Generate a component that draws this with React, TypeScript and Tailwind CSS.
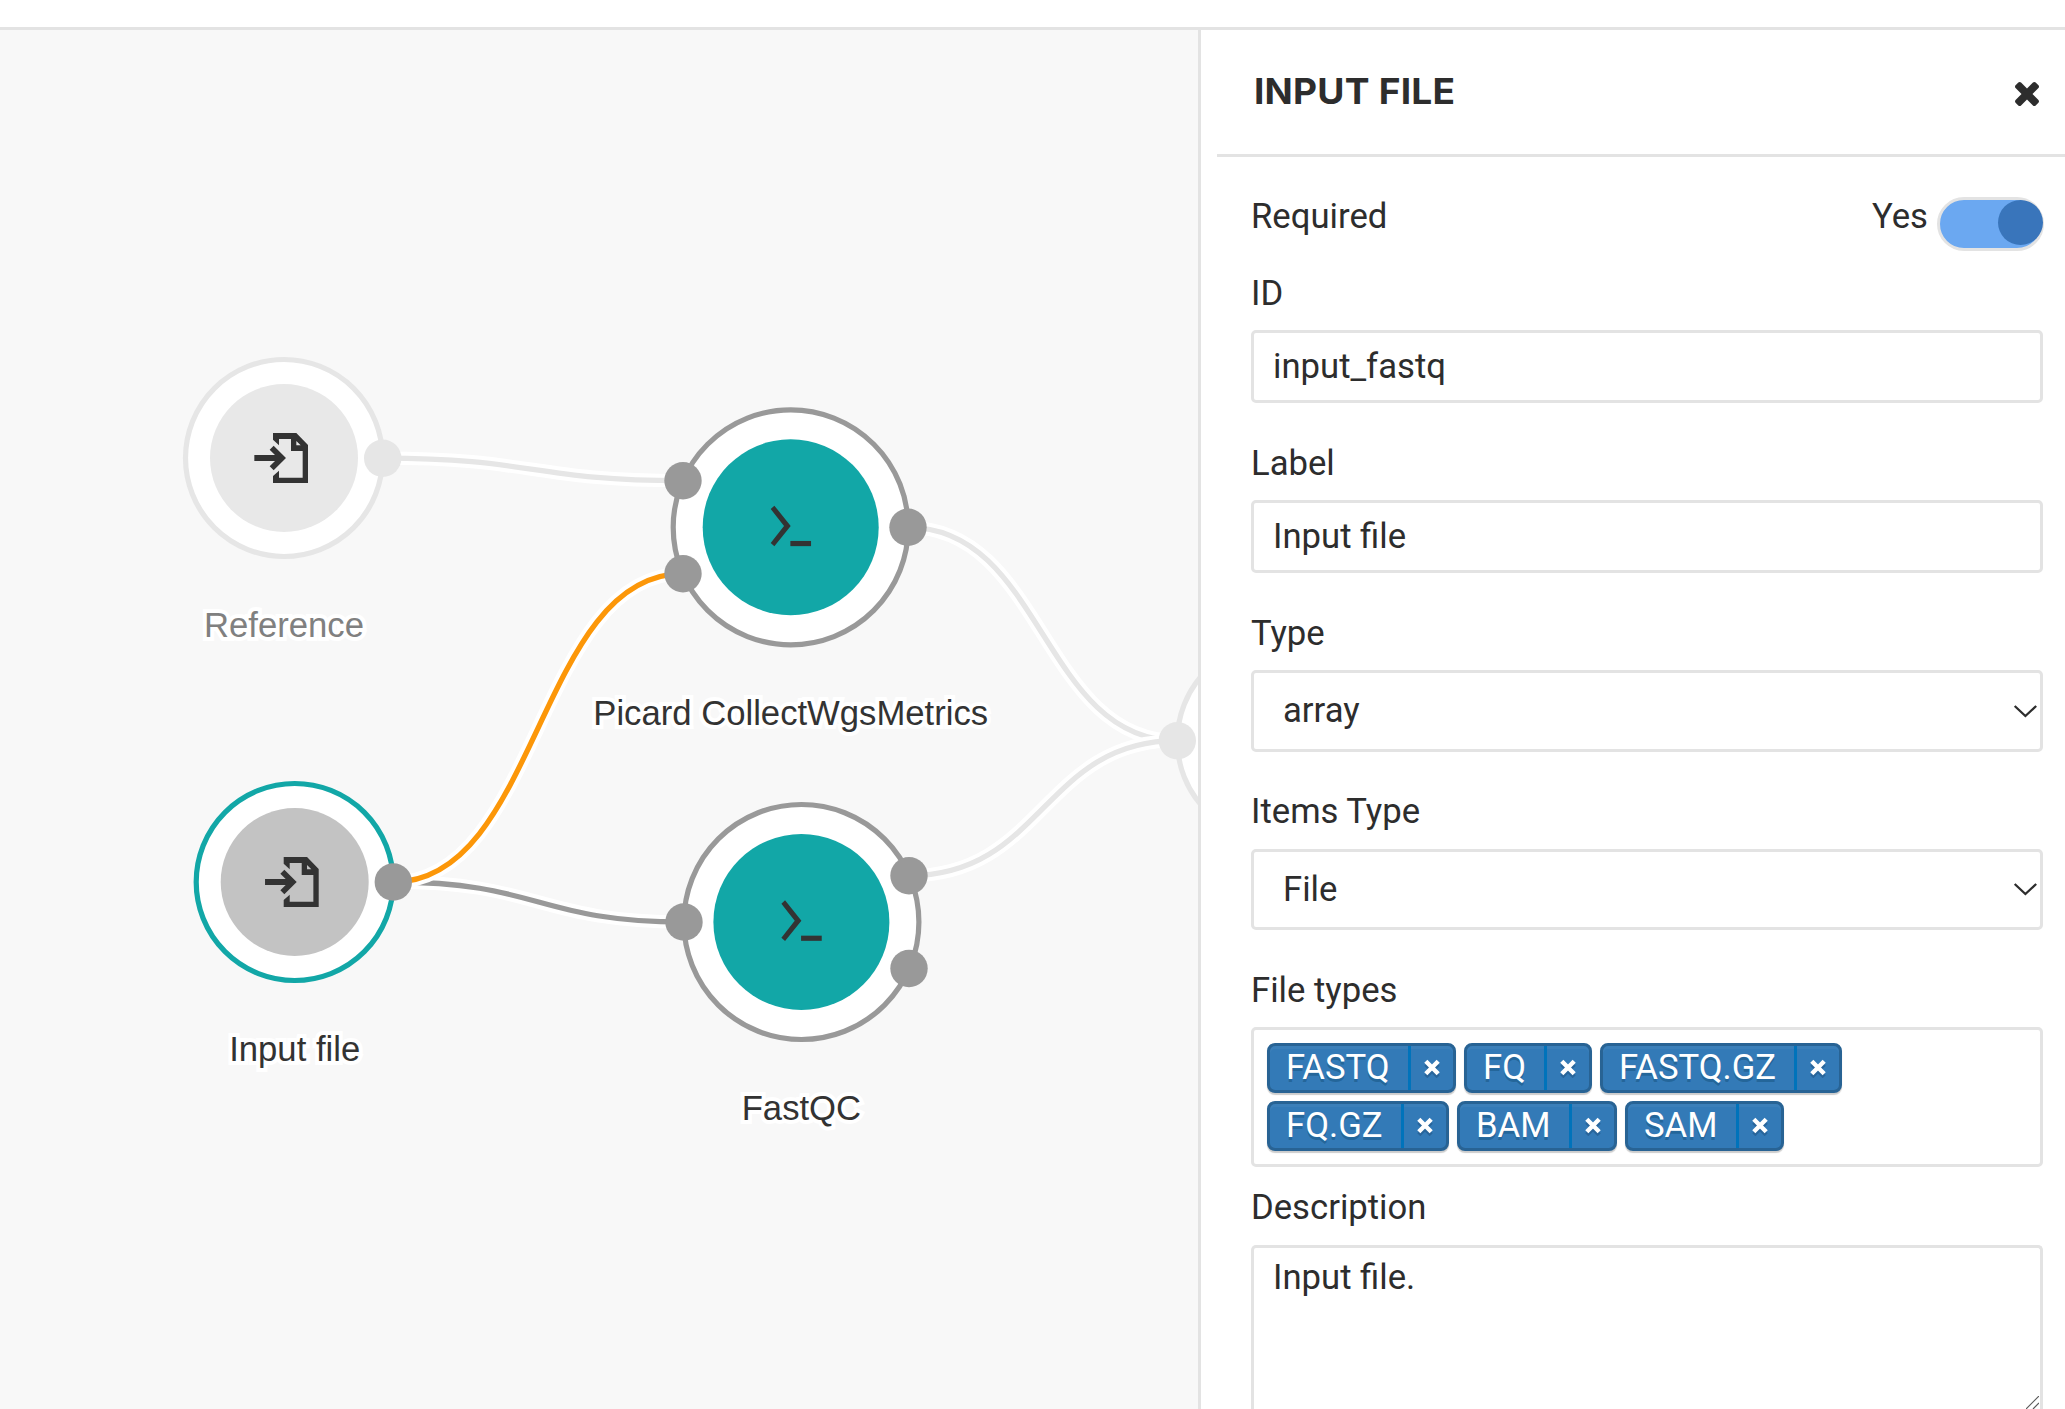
import type { ReactNode } from "react";

type Point = [number, number];

const GREY = "#999999";
const LIGHT = "#e6e6e6";
const TEAL = "#12a7a7";
const ORANGE = "#fc9709";

function Edge({ from, to, color }: { from: Point; to: Point; color: string }) {
  const mid = (from[0] + to[0]) / 2;
  const d = `M${from[0]} ${from[1]}C${mid} ${from[1]} ${mid} ${to[1]} ${to[0]} ${to[1]}`;
  return (
    <g fill="none">
      <path d={d} stroke="#ffffff" strokeWidth={13.3} />
      <path d={d} stroke={color} strokeWidth={5.3} />
    </g>
  );
}

function ImportGlyph() {
  return (
    <g transform="scale(0.33333)" fill="#333333">
      <path
        fillRule="evenodd"
        d="M-33-75H37L72-39V75H-33V54L-15 38V59H56V-21H21V-57H-15V-38L-33-55ZM37-51V-38H50Z"
      />
      <path d="M-31-37L6 0L-31 37L-43 25L-27 9H-89V-9H-27L-43-25Z" />
    </g>
  );
}

function TerminalGlyph() {
  return (
    <g transform="scale(0.33333)" fill="#333333">
      <path d="M-49-65L0-4L-49 57L-60 47L-20-4L-60-55Z" />
      <path d="M-1 41H61V56.500H-1Z" />
    </g>
  );
}

type NodeProps = {
  at: Point;
  ring: number;
  core: number;
  stroke: string;
  fill: string;
  ports: Point[];
  portColor: string;
  label?: string;
  labelY?: number;
  labelColor?: string;
  children?: ReactNode;
};

function GraphNode(p: NodeProps) {
  return (
    <g>
      <g transform={`translate(${p.at[0]} ${p.at[1]})`}>
        <circle r={p.ring} fill="#ffffff" stroke={p.stroke} strokeWidth={5.2} />
        <circle r={p.core} fill={p.fill} />
        {p.children}
      </g>
      {p.ports.map(([x, y]) => (
        <circle key={`${x}-${y}`} cx={x} cy={y} r={18.7} fill={p.portColor} />
      ))}
      {p.label && (
        <text
          x={p.at[0]}
          y={p.labelY}
          textAnchor="middle"
          fill={p.labelColor ?? "#333333"}
          stroke="#ffffff"
          strokeWidth={8}
          paintOrder="stroke"
          className="font-['Liberation_Sans',sans-serif] text-[34.67px]"
        >
          {p.label}
        </text>
      )}
    </g>
  );
}

function Graph() {
  return (
    <svg width={1198} height={1379} viewBox="0 30 1198 1379" className="block">
      <Edge from={[382.7, 458.2]} to={[683, 480.7]} color={LIGHT} />
      <Edge from={[393.3, 882]} to={[684, 922]} color={GREY} />
      <Edge from={[393.3, 882]} to={[683, 573.7]} color={ORANGE} />
      <Edge from={[908, 527.3]} to={[1177.3, 740.7]} color={LIGHT} />
      <Edge from={[909, 875.7]} to={[1177.3, 740.7]} color={LIGHT} />
      <GraphNode
        at={[284, 458]}
        ring={98.5}
        core={74}
        stroke={LIGHT}
        fill="#e8e8e8"
        ports={[[382.7, 458.2]]}
        portColor={LIGHT}
        label="Reference"
        labelY={637}
        labelColor="#808080"
      >
        <ImportGlyph />
      </GraphNode>
      <GraphNode
        at={[294.7, 882]}
        ring={98.5}
        core={74}
        stroke={TEAL}
        fill="#c3c3c3"
        ports={[[393.3, 882]]}
        portColor={GREY}
        label="Input file"
        labelY={1061}
      >
        <ImportGlyph />
      </GraphNode>
      <GraphNode
        at={[790.7, 527.3]}
        ring={117.5}
        core={88}
        stroke={GREY}
        fill={TEAL}
        ports={[
          [683, 480.7],
          [683, 573.7],
          [908, 527.3],
        ]}
        portColor={GREY}
        label="Picard CollectWgsMetrics"
        labelY={724.7}
      >
        <TerminalGlyph />
      </GraphNode>
      <GraphNode
        at={[801.4, 922]}
        ring={117.5}
        core={88}
        stroke={GREY}
        fill={TEAL}
        ports={[
          [684, 922],
          [909, 875.7],
          [909, 968.5],
        ]}
        portColor={GREY}
        label="FastQC"
        labelY={1120}
      >
        <TerminalGlyph />
      </GraphNode>
      <GraphNode
        at={[1275.8, 740.7]}
        ring={98.5}
        core={74}
        stroke={LIGHT}
        fill="#e8e8e8"
        ports={[[1177.3, 740.7]]}
        portColor={LIGHT}
      />
    </svg>
  );
}

function Label({ children }: { children: ReactNode }) {
  return <div className="h-[40px] leading-[40px]">{children}</div>;
}

function TextField({ label, value }: { label: string; value: string }) {
  return (
    <div className="mb-[40px] flex flex-col gap-[17px]">
      <Label>{label}</Label>
      <div className="flex h-[73px] items-center rounded-[5px] border-[3px] border-[#e3e3e3] pb-[2px] pl-[19px] leading-[40px]">
        {value}
      </div>
    </div>
  );
}

function SelectField({ label, value, className }: { label: string; value: string; className: string }) {
  return (
    <div className={`flex flex-col justify-between ${className}`}>
      <Label>{label}</Label>
      <div className="flex h-[81.500px] items-center justify-between rounded-[5px] border-[3px] border-[#e3e3e3] pr-[2px] pl-[29px] leading-[40px]">
        <span className="pb-[1.500px]">{value}</span>
        <svg width={25} height={14} viewBox="0 0 25 14" fill="none" stroke="#2d2d2d" strokeWidth={2.3}>
          <path d="M1.700 2L12.400 12L23.200 2" />
        </svg>
      </div>
    </div>
  );
}

const TAGS = [
  { name: "FASTQ", width: "w-[189px]" },
  { name: "FQ", width: "w-[128px]" },
  { name: "FASTQ.GZ", width: "w-[242px]" },
  { name: "FQ.GZ", width: "w-[182px]" },
  { name: "BAM", width: "w-[160px]" },
  { name: "SAM", width: "w-[159px]" },
];

function Tag({ name, width }: { name: string; width: string }) {
  return (
    <div
      className={`${width} flex h-[50px] rounded-[8px] border-[3px] border-[#286394] bg-[#337ab7] text-white shadow-[0_2px_1px_rgba(0,0,0,0.2),inset_0_3px_0_rgba(255,255,255,0.04)]`}
    >
      <div className="flex-1 pl-[16px] leading-[42px] text-shadow-[0_3px_0_rgba(0,51,83,0.3)]">{name}</div>
      <div className="flex w-[45px] items-center justify-center border-l-[3px] border-[#0073bb] pr-px">
        <svg width={16} height={20} viewBox="0 0 16 20" fill="none" strokeWidth={4.4}>
          <path d="M1.800 6.300L14.200 18.700M14.200 6.300L1.800 18.700" stroke="#28659b" />
          <path d="M1.800 3.300L14.200 15.700M14.200 3.300L1.800 15.700" stroke="#ffffff" />
        </svg>
      </div>
    </div>
  );
}

function Toggle() {
  return (
    <div className="relative mt-px h-[54px] w-[107px] rounded-full border-[3px] border-[#e3e3e3] bg-[#6ba8f1]">
      <div className="absolute top-0 right-[-2px] size-[45px] rounded-full bg-[#3975bb]" />
    </div>
  );
}

function Panel() {
  return (
    <aside className="flex flex-1 flex-col border-l-[3px] border-[#e3e3e3] bg-white pl-[16px]">
      <header className="flex h-[127px] shrink-0 items-center justify-between border-b-[3px] border-[#e3e3e3] pr-[26px] pl-[37px]">
        <h1 className="origin-left scale-x-[1.045] font-['Inter',sans-serif] text-[35.500px] leading-[40px] font-bold tracking-[0.2px]">
          INPUT FILE
        </h1>
        <svg width={24} height={24} viewBox="302 366 1188 1188" fill="#2d2d2d" className="mt-[4px]">
          <path d="M1490 1322q0 40-28 68l-136 136q-28 28-68 28t-68-28l-294-294-294 294q-28 28-68 28t-68-28l-136-136q-28-28-28-68t28-68l294-294-294-294q-28-28-28-68t28-68l136-136q28-28 68-28t68 28l294 294 294-294q28-28 68-28t68 28l136 136q28 28 28 68t-28 68l-294 294 294 294q28 28 28 68z" />
        </svg>
      </header>
      <div className="flex w-[826px] flex-1 flex-col pt-[39px] pl-[34px]">
        <div className="-mr-px flex h-[77px] justify-between self-stretch">
          <Label>Required</Label>
          <div className="flex w-[172px] justify-between">
            <Label>Yes</Label>
            <Toggle />
          </div>
        </div>
        <TextField label="ID" value="input_fastq" />
        <TextField label="Label" value="Input file" />
        <div className="mb-[40px] flex flex-col gap-[39px]">
          <SelectField label="Type" value="array" className="h-[138.500px]" />
          <SelectField label="Items Type" value="File" className="h-[139.500px]" />
        </div>
        <div className="mb-[20px] flex flex-col gap-[17px]">
          <Label>File types</Label>
          <div className="flex h-[140px] flex-wrap content-start gap-[8px] rounded-[5px] border-[3px] border-[#e3e3e3] pt-[13px] pr-[180px] pl-[13px]">
            {TAGS.map((t) => (
              <Tag key={t.name} {...t} />
            ))}
          </div>
        </div>
        <div className="flex flex-1 flex-col gap-[18px]">
          <Label>Description</Label>
          <div className="relative flex-1 rounded-t-[5px] border-[3px] border-b-0 border-[#e3e3e3] pt-[9px] pl-[19px] leading-[40px]">
            Input file.
            <svg className="absolute right-px bottom-0" width={13} height={13} viewBox="0 0 13 13" stroke="#5a5a5a" strokeWidth={1.2}>
              <path d="M0 13L13 0M7 13L13 7" />
            </svg>
          </div>
        </div>
      </div>
    </aside>
  );
}

export default function App() {
  return (
    <div className="flex h-[1409px] w-[2065px] flex-col overflow-hidden bg-white font-['Roboto',sans-serif] text-[34.67px] text-[#2d2d2d]">
      <div className="h-[30px] shrink-0 border-b-[3px] border-[#e3e3e3]" />
      <div className="flex min-h-0 flex-1">
        <main className="w-[1198px] shrink-0 bg-[#f8f8f8]">
          <Graph />
        </main>
        <Panel />
      </div>
    </div>
  );
}
